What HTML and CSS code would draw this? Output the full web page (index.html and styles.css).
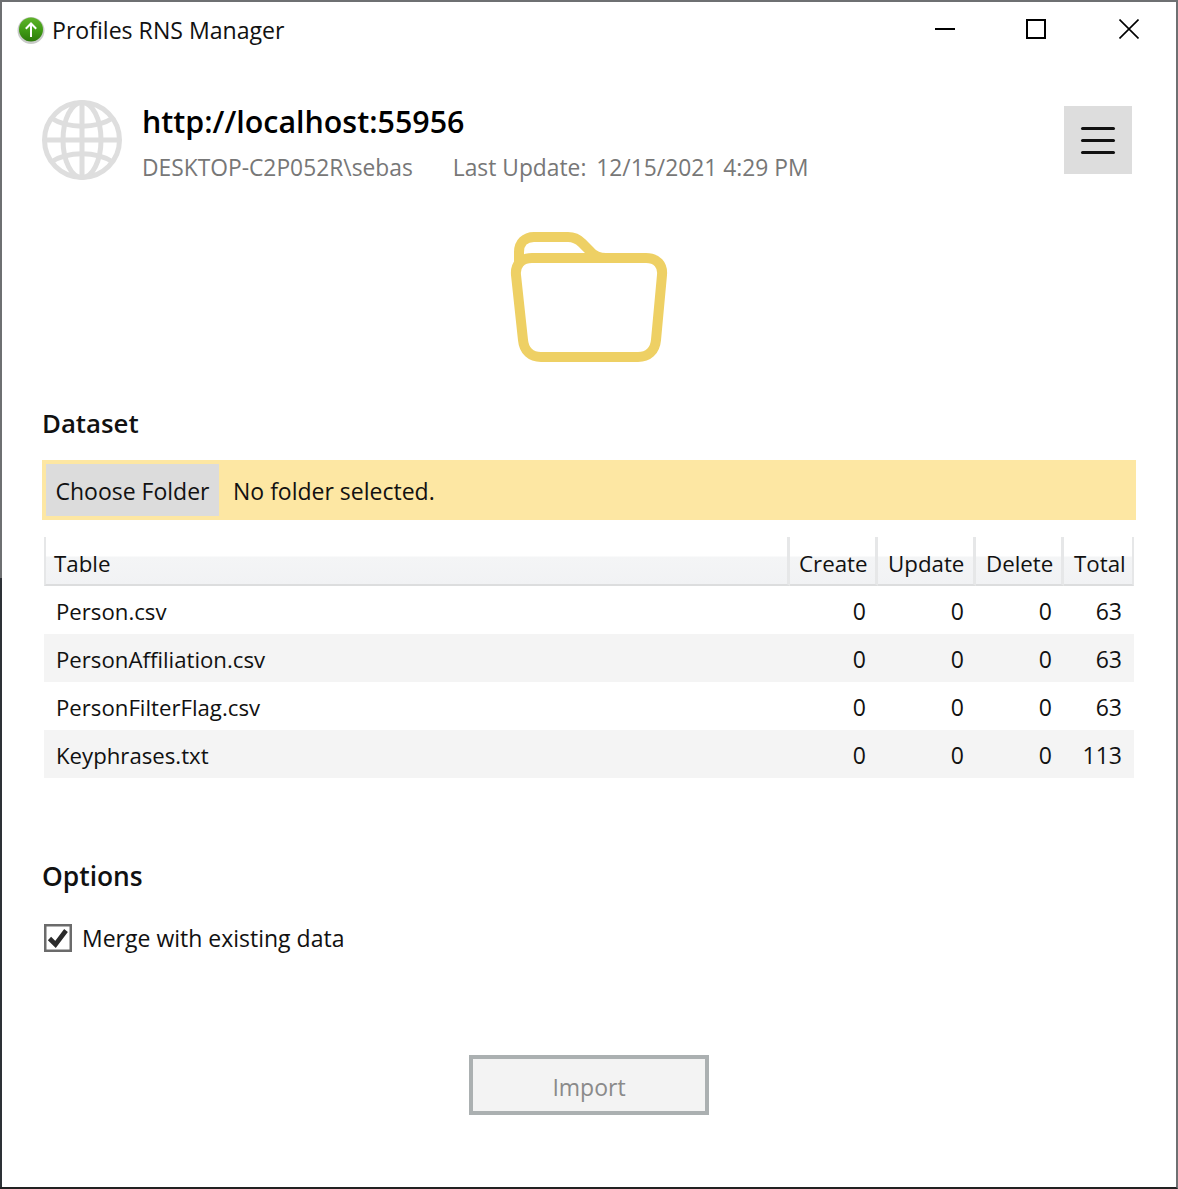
FILE: index.html
```html
<!DOCTYPE html>
<html lang="en">
<head>
  <meta charset="UTF-8">
  <meta name="viewport" content="width=device-width, initial-scale=1.0">
  <title>Profiles RNS Manager</title>
  <link rel="stylesheet" href="styles.css">
</head>
<body>
  <div class="window">
    <div class="titlebar">
      <svg class="app-icon" width="28" height="28" viewBox="0 0 28 28">
        <defs>
          <linearGradient id="appGreen" x1="0" y1="0" x2="0" y2="1">
            <stop offset="0" stop-color="#5fb32a"/>
            <stop offset="0.55" stop-color="#3f9a14"/>
            <stop offset="1" stop-color="#2c7a0a"/>
          </linearGradient>
        </defs>
        <circle cx="14" cy="14.5" r="13.5" fill="#c9cbc9"/>
        <circle cx="14" cy="13.5" r="12" fill="url(#appGreen)"/>
        <path d="M14 21V7.5M8.8 12.7L14 7.5L19.2 12.7" fill="none" stroke="#fff" stroke-width="2"/>
      </svg>
      <span class="app-title">Profiles RNS Manager</span>
      <div class="window-controls">
        <svg width="20" height="20" viewBox="0 0 20 20"><path d="M0 10H20" stroke="#000" stroke-width="2"/></svg>
        <svg width="20" height="20" viewBox="0 0 20 20"><rect x="1" y="1" width="18" height="18" fill="none" stroke="#000" stroke-width="2"/></svg>
        <svg class="close-icon" width="20" height="20" viewBox="0 0 20 20"><path d="M0.5 0.5L19.5 19.5M19.5 0.5L0.5 19.5" stroke="#000" stroke-width="1.6"/></svg>
      </div>
    </div>

    <div class="content">
      <div class="header">
        <svg class="globe" width="80" height="80" viewBox="0 0 80 80" fill="none" stroke="#dedede" stroke-width="5">
          <circle cx="40" cy="40" r="37.5"/>
          <ellipse cx="40" cy="40" rx="19" ry="37.5"/>
          <path d="M40 2V78M2 40H78"/>
          <path d="M9 18C26 29 54 29 71 18M9 62C26 51 54 51 71 62"/>
        </svg>
        <div class="server">
          <div class="server-url">http://localhost:55956</div>
          <div class="server-info">
            <span class="server-user">DESKTOP-C2P052R\sebas</span>
            <span class="server-update">Last Update: <span class="update-date">12/15/2021 4:29 PM</span></span>
          </div>
        </div>
        <div class="menu-button">
          <span></span><span></span><span></span>
        </div>
      </div>

      <div class="folder-wrap">
        <svg width="160" height="132" viewBox="509 231 160 132" fill="none" stroke="#eed064" stroke-width="10">
          <path d="M532 258H646C657 258 663 265 662 275L656 340C655 351 648 357 638 357H541C531 357 524 351 523 340L516 275C515 265 521 258 532 258Z"/>
          <path d="M519 262V252C519 243 525 237 534 237H568C574 237 578 239 582 243L590 251C594 256 600 258 606 258"/>
        </svg>
      </div>

      <h2 class="section-title dataset-title">Dataset</h2>
      <div class="folder-bar">
        <div class="choose-button">Choose Folder</div>
        <div class="folder-status">No folder selected.</div>
      </div>

      <table class="data-table">
        <colgroup>
          <col class="col-name"><col class="col-create"><col class="col-update"><col class="col-delete"><col class="col-total">
        </colgroup>
        <thead>
          <tr><th>Table</th><th>Create</th><th>Update</th><th>Delete</th><th>Total</th></tr>
        </thead>
        <tbody>
          <tr><td>Person.csv</td><td>0</td><td>0</td><td>0</td><td>63</td></tr>
          <tr><td>PersonAffiliation.csv</td><td>0</td><td>0</td><td>0</td><td>63</td></tr>
          <tr><td>PersonFilterFlag.csv</td><td>0</td><td>0</td><td>0</td><td>63</td></tr>
          <tr><td>Keyphrases.txt</td><td>0</td><td>0</td><td>0</td><td>113</td></tr>
        </tbody>
      </table>

      <h2 class="section-title options-title">Options</h2>
      <div class="option">
        <svg class="checkbox" width="28" height="28" viewBox="0 0 28 28">
          <rect x="1.25" y="1.25" width="25.5" height="25.5" fill="#fff" stroke="#6b6b6b" stroke-width="2.5"/>
          <path d="M5.5 14.5L11.5 20.5L22 6.5" fill="none" stroke="#2b2b2b" stroke-width="4.6"/>
        </svg>
        <span>Merge with existing data</span>
      </div>

      <div class="actions">
        <div class="import-button">Import</div>
      </div>
    </div>
  </div>
</body>
</html>
```

FILE: styles.css
```css
* {
  box-sizing: border-box;
}
html, body {
  margin: 0;
  padding: 0;
}
body {
  width: 1178px;
  height: 1189px;
  overflow: hidden;
  background: #fff;
  font-family: "Open Sans", "Noto Sans", sans-serif;
  font-size: 23px;
  color: #111;
}
/* el borde izquierdo cambia de color a media altura */
.window {
  width: 1178px;
  height: 1189px;
  border: 2px solid #6e7072;
  border-left: 0;
  border-bottom-color: #222;
  padding-left: 2px;
  background:
    linear-gradient(#6e7072, #6e7072) 0 0 / 2px 576px no-repeat,
    linear-gradient(#2d3136, #2d3136) 0 576px / 2px 100% no-repeat,
    #fff;
}

/* barra de titulo */
.titlebar {
  display: flex;
  align-items: center;
  height: 56px;
  padding-left: 15px;
}
.app-icon {
  margin-right: 7px;
}
.app-title {
  font-size: 23.1px;
}
.window-controls {
  display: flex;
  gap: 71px;
  margin-left: auto;
  margin-right: 37px;
  margin-top: -2px;
}
.close-icon {
  margin-left: 2px;
}

.content {
  padding: 0 40px;
}

.header {
  display: flex;
  align-items: flex-start;
  margin-top: 42px;
  height: 80px;
}
.server {
  margin-left: 20px;
  padding-top: 2px;
}
.server-url {
  font-size: 30.4px;
  font-weight: 600;
  line-height: 40px;
  color: #000;
}
.server-info {
  display: flex;
  gap: 40px;
  margin-top: 10px;
  font-size: 22.8px;
  line-height: 32px;
  color: #777;
}
.update-date {
  margin-left: 4px;
}
.menu-button {
  display: flex;
  flex-direction: column;
  justify-content: center;
  align-items: center;
  gap: 9px;
  width: 68px;
  height: 68px;
  margin-left: auto;
  margin-right: 4px;
  margin-top: 6px;
  background: #ddd;
}
.menu-button span {
  width: 34px;
  height: 3px;
  border-radius: 2px;
  background: #111;
}

.folder-wrap {
  display: flex;
  justify-content: center;
  margin-top: 51px;
}

.section-title {
  margin: 0;
  font-size: 25.8px;
  font-weight: 600;
  line-height: 36px;
}
.dataset-title {
  margin-top: 42px;
  margin-left: 0;
}
.folder-bar {
  display: flex;
  align-items: center;
  height: 60px;
  margin-top: 19px;
  padding: 4px;
  background: #fde7a3;
  width: 1094px;
}
.choose-button {
  display: flex;
  align-items: center;
  justify-content: center;
  width: 173px;
  height: 52px;
  padding-top: 2px;
  background: #dcdcdc;
}
.folder-status {
  margin-left: 14px;
  padding-top: 2px;
}

.data-table {
  width: 1090px;
  margin: 17px 0 0 2px;
  border-collapse: separate;
  border-spacing: 0;
  table-layout: fixed;
}
.col-name { width: 746px; }
.col-create { width: 88px; }
.col-update { width: 98px; }
.col-delete { width: 88px; }
.col-total { width: 70px; }

.data-table th {
  height: 49px;
  padding: 7px 0 0 10px;
  font-size: 22.3px;
  font-weight: 400;
  text-align: left;
  background: linear-gradient(#fff 0, #fff 19px, #f4f5f6 20px, #f1f2f4 100%);
  border-right: 3px solid #e6e7e8;
  border-bottom: 2px solid #dcddde;
  line-height: 30px;
}
.data-table th:first-child {
  padding-left: 8px;
  border-left: 2px solid #e6e7e8;
}
.data-table th:nth-child(2) {
  padding-left: 9px;
}
.data-table th:last-child {
  border-right: 2px solid #e6e7e8;
}
.data-table td {
  height: 48px;
  padding: 2px 12px 0;
  text-align: right;
}
.data-table td:first-child {
  font-size: 22.2px;
  text-align: left;
}
.data-table tbody tr:nth-child(even) {
  background: #f4f4f4;
}

.options-title {
  margin-top: 80px;
  font-size: 26.4px;
}
.option {
  display: flex;
  align-items: center;
  gap: 10px;
  margin-top: 28px;
  margin-left: 2px;
}

.actions {
  display: flex;
  justify-content: center;
  margin-top: 101px;
}
.import-button {
  display: flex;
  align-items: center;
  justify-content: center;
  width: 240px;
  height: 60px;
  padding-top: 3px;
  border: 4px solid #abb0b1;
  background: #f3f3f3;
  color: #8a8a8a;
}
```
